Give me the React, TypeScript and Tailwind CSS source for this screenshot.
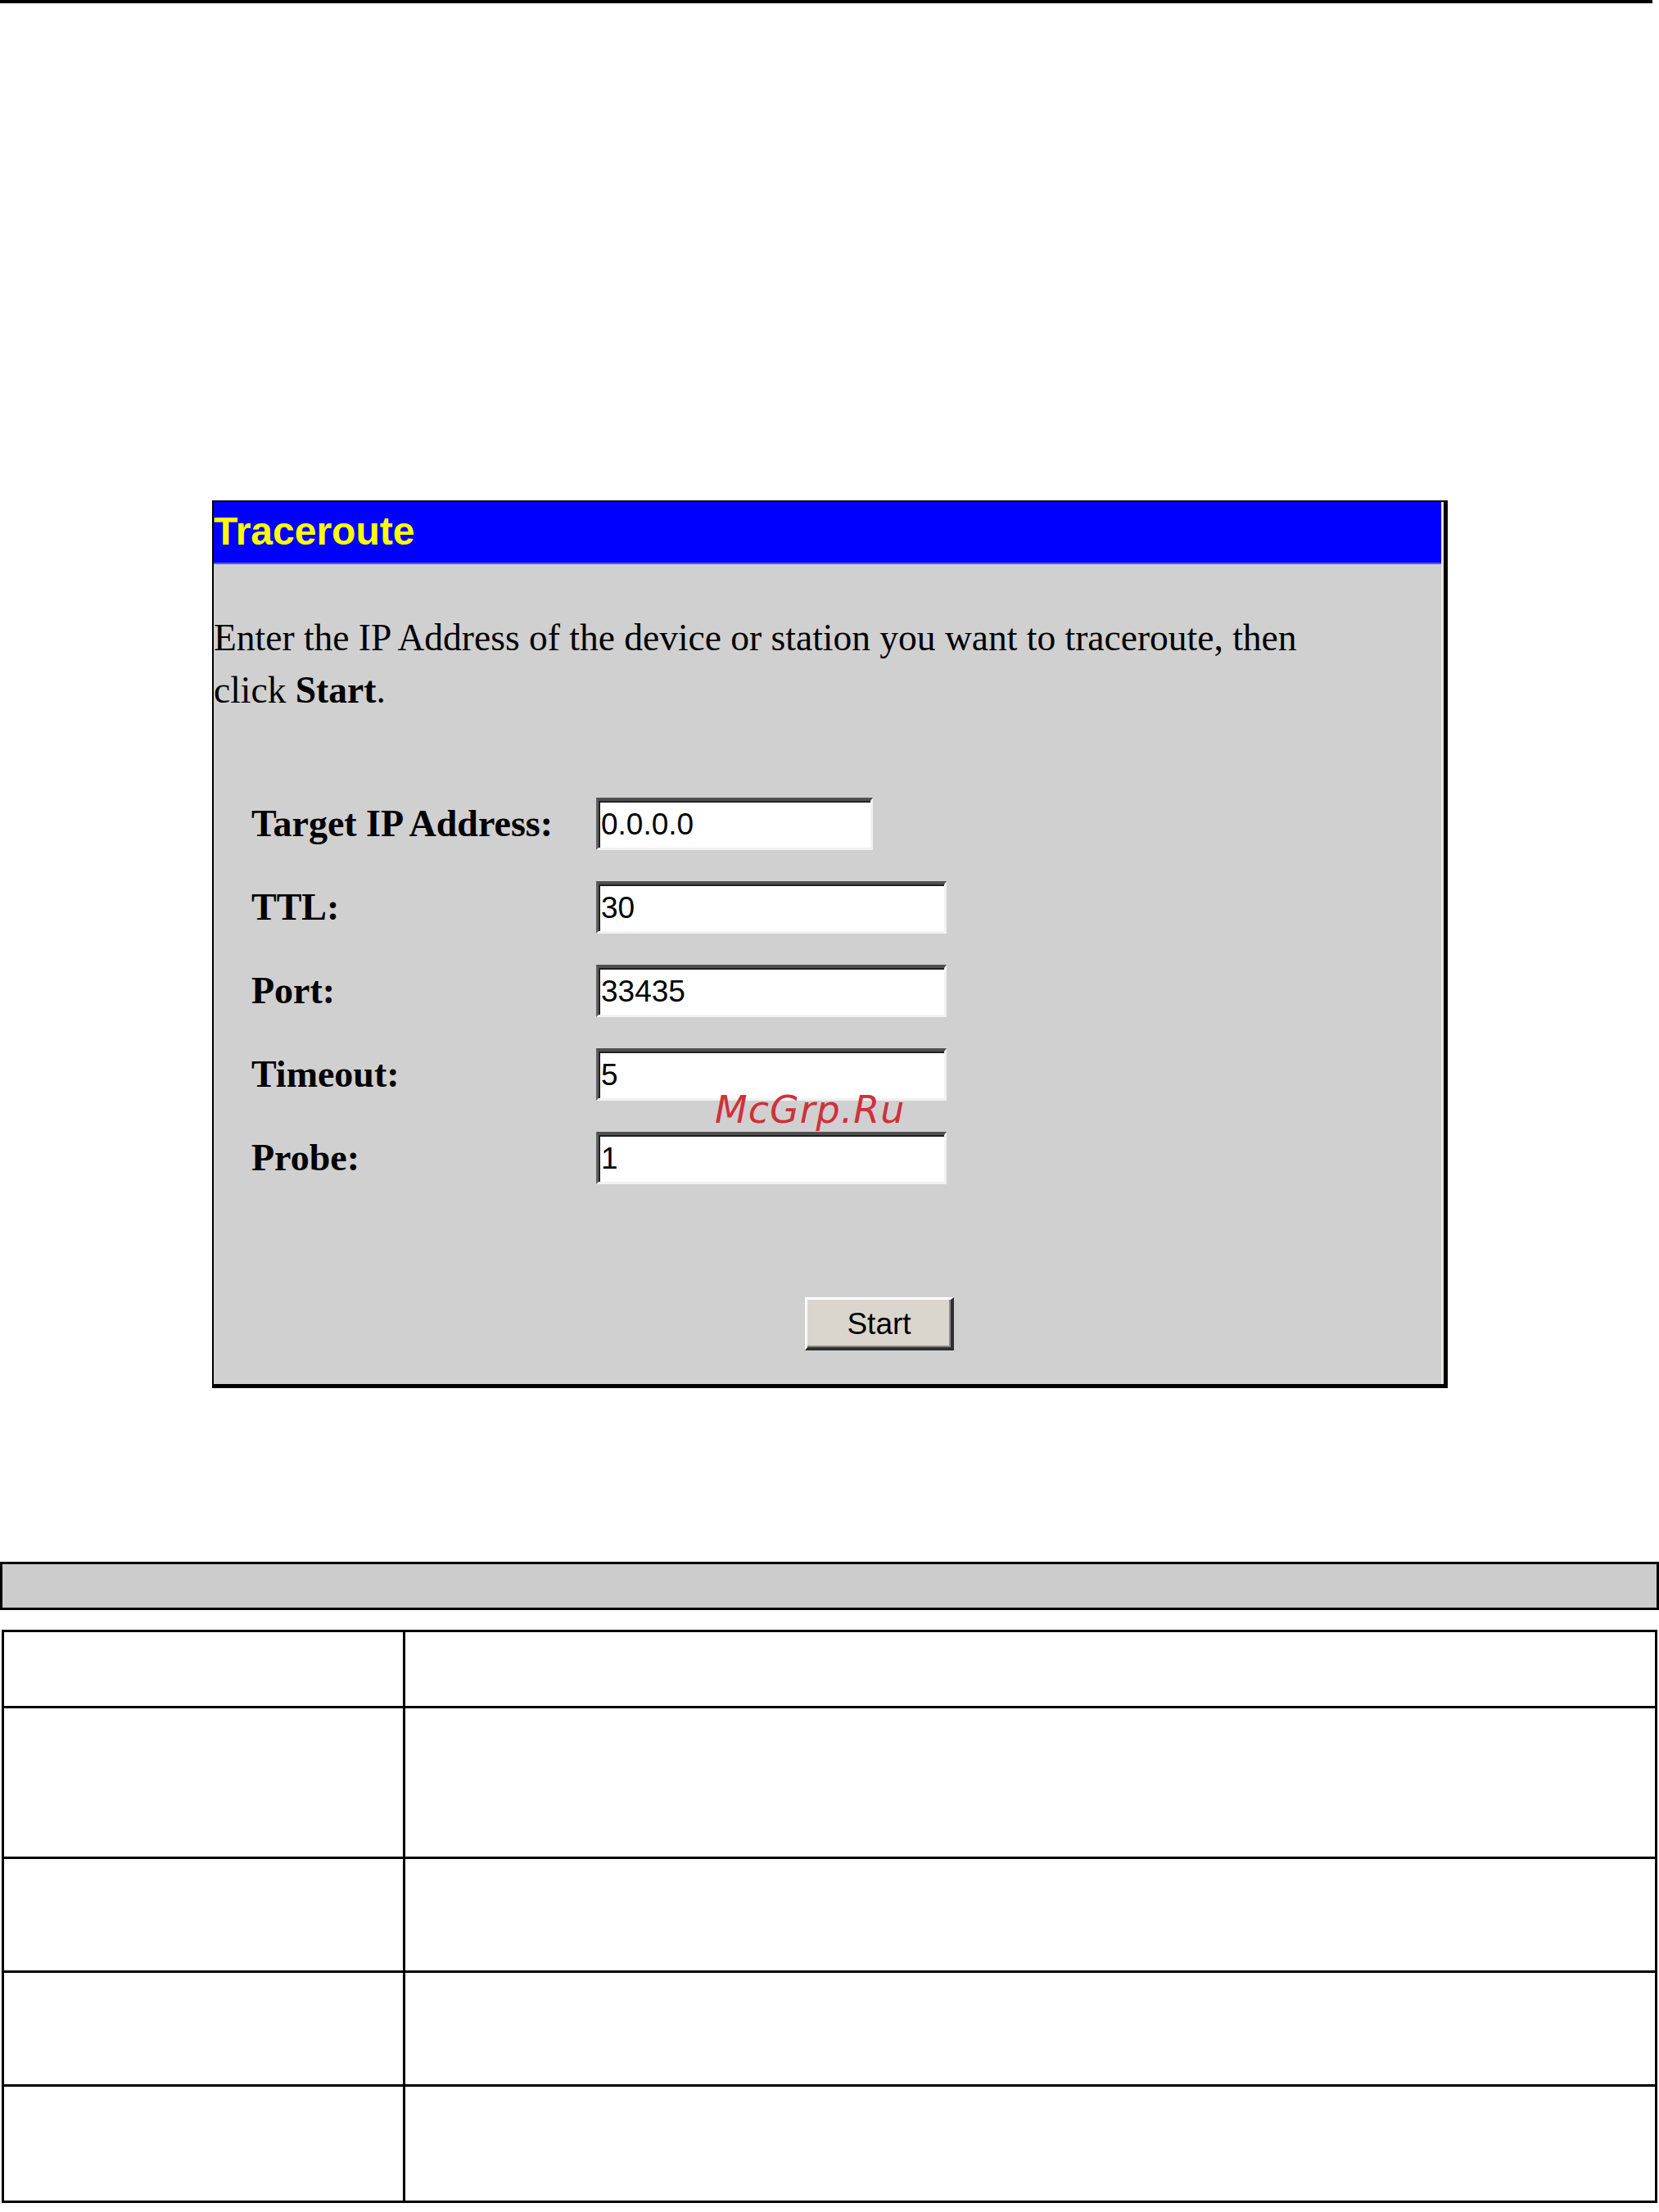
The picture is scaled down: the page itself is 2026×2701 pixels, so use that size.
const fields = [
  { label: "Target IP Address:", value: "0.0.0.0", width: "w-[338px]" },
  { label: "TTL:", value: "30", width: "w-[428px]" },
  { label: "Port:", value: "33435", width: "w-[428px]" },
  { label: "Timeout:", value: "5", width: "w-[428px]" },
  { label: "Probe:", value: "1", width: "w-[428px]" },
];

const rowHeights = ["h-[93px]", "h-[184px]", "h-[139px]", "h-[139px]", "h-[139px]"];

function TracerouteForm() {
  return (
    <div className="ml-[259px] mt-[607px] w-[1509px] h-[1084px] border-t-2 border-l-2 border-r-[5px] border-b-[5px] border-black bg-[#d0d0d0]">
      <div className="h-full flex flex-col border-r-[3px] border-[#e8e8dc]">
        {/* title bar */}
        <div className="h-[76px] shrink-0 bg-[#0000ff] border-b-2 border-[#5c5cd6] pt-[12px]">
          <h1 className="font-['Liberation_Sans',Arial,sans-serif] font-bold text-[48px] leading-[48px] text-[#ffff00]">
            Traceroute
          </h1>
        </div>

        <p className="mt-[58px] font-['Liberation_Serif','Times_New_Roman',serif] text-[45.5px] leading-[64px] text-black">
          Enter the IP Address of the device or station you want to traceroute, then
          <br />
          click <b>Start</b>.
        </p>

        {/* fields */}
        <div className="mt-[99px] flex flex-col gap-[38px]">
          {fields.map((f) => (
            <div key={f.label} className="flex flex-row items-center h-[64px]">
              <label className="w-[467px] pl-[46px] font-['Liberation_Serif','Times_New_Roman',serif] font-bold text-[46px] leading-[58px] text-black">
                {f.label}
              </label>
              <input
                readOnly
                value={f.value}
                className={`${f.width} h-[64px] bg-white border-t-[4px] border-l-[3px] border-b-[3px] border-r-[3px] border-t-[#505050] border-l-[#606060] border-b-[#f2f2f2] border-r-[#f2f2f2] shadow-[inset_2px_2px_0_#202020] pl-[3px] font-['Liberation_Sans',Arial,sans-serif] text-[37px] text-black outline-none`}
              />
            </div>
          ))}
        </div>

        <button className="mt-[138px] ml-[722px] w-[182px] h-[65px] bg-[#dad6ce] border-t-[3px] border-l-[3px] border-b-[4px] border-r-[4px] border-t-white border-l-white border-b-[#303030] border-r-[#303030] shadow-[inset_-2px_-2px_0_#8a8a8a] font-['Liberation_Sans',Arial,sans-serif] text-[37px] leading-none text-black">
          Start
        </button>
      </div>
    </div>
  );
}

function DescriptionTable() {
  return (
    <>
      <div className="mt-[212px] h-[59px] w-full border-[3px] border-black bg-[#cccccc]" />
      <div className="mt-[24px] ml-[2px] w-[2022px] border-[3px] border-black">
        {rowHeights.map((h, i) => (
          <div
            key={i}
            className={`grid grid-cols-[490px_1fr] ${h} ${i < rowHeights.length - 1 ? "border-b-[3px] border-black" : ""}`}
          >
            <div className="border-r-[3px] border-black" />
            <div />
          </div>
        ))}
      </div>
    </>
  );
}

export default function App() {
  return (
    <div className="relative w-[2026px] h-[2701px] bg-white overflow-hidden">
      <div className="w-[2018px] h-[4px] bg-black" />
      <TracerouteForm />
      <DescriptionTable />

      {/* watermark */}
      <span className="absolute left-[873px] top-[1332px] font-['DejaVu_Sans',sans-serif] italic text-[46px] leading-[46px] tracking-[1px] text-[#d0303a]">
        McGrp.Ru
      </span>
    </div>
  );
}
